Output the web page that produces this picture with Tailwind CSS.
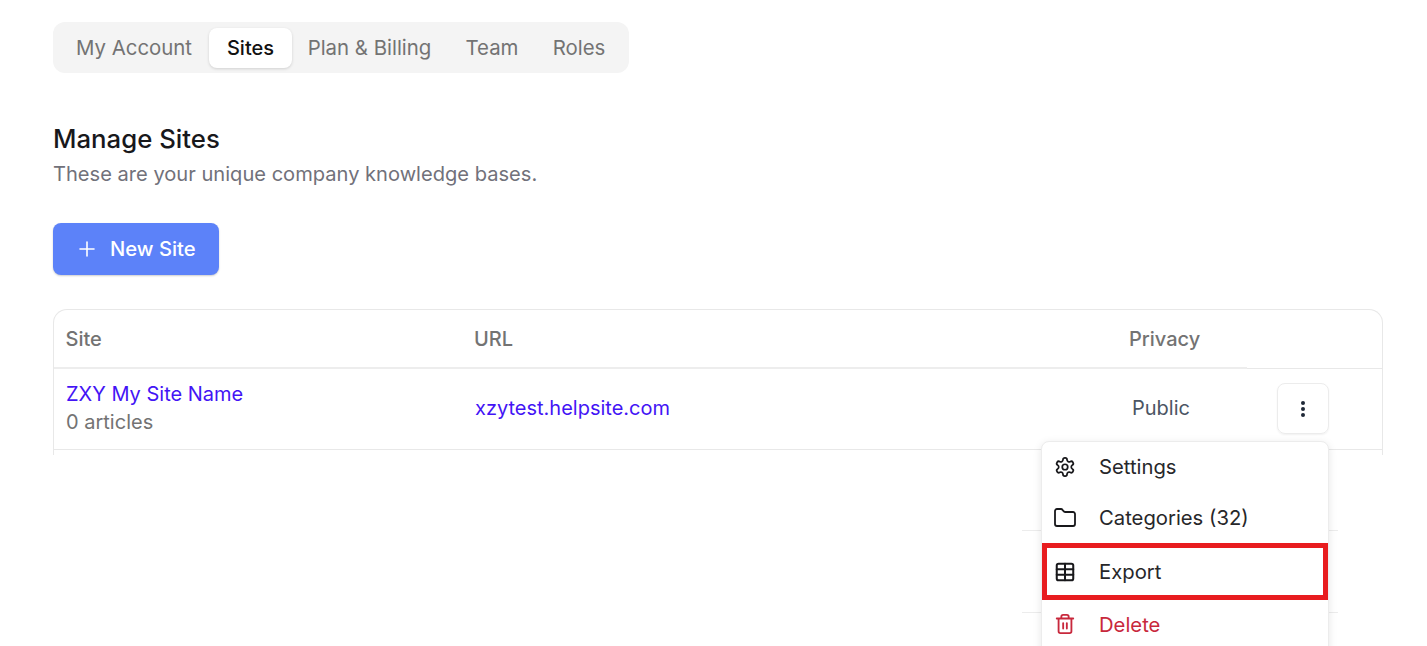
<!DOCTYPE html>
<html lang="en">
<head>
    <meta charset="UTF-8">
    <title>Manage Sites</title>
    <script src="https://cdn.jsdelivr.net/npm/@tailwindcss/browser@4"></script>
</head>
<body class="bg-white font-['Inter',sans-serif] h-[646px] overflow-hidden">
    <div class="relative h-[646px] overflow-hidden pt-[22px] pl-[53px] pr-[44px]">
        <!-- tabs -->
        <nav class="flex items-center w-[576px] h-[51px] rounded-[12px] bg-[#f4f4f4] pl-[6px] text-[20.4px] text-[#737373]">
            <a class="w-[150px] pt-[2px] text-center">My Account</a>
            <a class="w-[83px] h-[40px] flex items-center justify-center rounded-[8px] bg-white text-[#111111] font-medium text-[20px] shadow-[0_1px_3px_rgba(0,0,0,0.15)]">Sites</a>
            <a class="w-[155px] pt-[2px] text-center">Plan &amp; Billing</a>
            <a class="w-[90px] pt-[2px] text-center">Team</a>
            <a class="w-[84px] pt-[2px] text-center">Roles</a>
        </nav>

        <h1 class="mt-[49px] text-[25.75px] leading-[34px] font-medium text-[#18181b]">Manage Sites</h1>
        <p class="mt-[3px] text-[20.1px] leading-[31px] text-[#71717a]">These are your unique company knowledge bases.</p>

        <button class="mt-[33px] flex items-center w-[165.5px] h-[52px] rounded-[8px] bg-[#5c82f9] text-white text-[20.2px] font-medium pl-[25px] gap-[14px] shadow-[0_1px_2px_rgba(0,0,0,0.2)]">
            <svg class="w-[18px] h-[18px]" viewBox="0 0 18 18" fill="none" stroke="currentColor" stroke-width="1.6" stroke-linecap="round"><path d="M9 2v14M2 9h14"/></svg>
            New Site
        </button>

        <!-- sites table -->
        <div class="mt-[34px] h-[146px] w-[1330px] rounded-t-[14px] border-x border-t border-[#e8e8e8]">
            <div class="flex h-[59px] text-[20px] font-medium text-[#737373]">
                <div class="flex items-center w-[420px] pl-[11.5px] border-b-2 border-[#ededed]">Site</div>
                <div class="flex items-center w-[655px] border-b-2 border-[#ededed]">URL</div>
                <div class="flex items-center w-[118px] border-b-2 border-[#ededed]">Privacy</div>
                <div class="flex-1 border-b border-[#e8e8e8]"></div>
            </div>
            <div class="flex items-center h-[81px] border-b border-[#e8e8e8]">
                <div class="w-[421px] pl-[12px] pb-[2px]">
                    <a class="block text-[20px] leading-[28px] text-[#4314f5]">ZXY My Site Name</a>
                    <p class="text-[20px] leading-[28px] text-[#737373]">0 articles</p>
                </div>
                <a class="w-[657px] pb-[2px] text-[20px] text-[#4314f5]">xzytest.helpsite.com</a>
                <span class="w-[145px] pb-[2px] text-[20px] text-[#4b5563]">Public</span>
                <button class="flex items-center justify-center w-[52px] h-[51px] mb-[1px] rounded-[8px] border border-[#ececec] shadow-[0_1px_2px_rgba(0,0,0,0.06)]">
                    <svg class="w-[6px] h-[18px]" viewBox="0 0 6 18" fill="#1f2937"><circle cx="3" cy="3" r="2"/><circle cx="3" cy="9" r="2"/><circle cx="3" cy="15" r="2"/></svg>
                </button>
            </div>
        </div>

        <!-- faint rows behind the menu -->
        <div class="absolute left-[1022px] top-[530px] w-[316px] h-px bg-[#ececec]"></div>
        <div class="absolute left-[1022px] top-[612px] w-[316px] h-px bg-[#ececec]"></div>

        <!-- row menu -->
        <div class="absolute left-[1041px] top-[441px] w-[288px] h-[230px] rounded-[8px] border border-[#ececec] bg-white text-[20.25px] text-[#27272a] shadow-[0_2px_8px_rgba(0,0,0,0.1)]">
            <div class="flex items-center h-[50px] pl-[12px] gap-[23px]">
                <svg class="w-[22px] h-[22px]" viewBox="0 0 24 24" fill="none" stroke="#18181b" stroke-width="1.9" stroke-linecap="round" stroke-linejoin="round"><path d="M12.22 2h-.44a2 2 0 0 0-2 2v.18a2 2 0 0 1-1 1.73l-.43.25a2 2 0 0 1-2 0l-.15-.08a2 2 0 0 0-2.73.73l-.22.38a2 2 0 0 0 .73 2.73l.15.1a2 2 0 0 1 1 1.72v.51a2 2 0 0 1-1 1.74l-.15.09a2 2 0 0 0-.73 2.73l.22.38a2 2 0 0 0 2.73.73l.15-.08a2 2 0 0 1 2 0l.43.25a2 2 0 0 1 1 1.73V20a2 2 0 0 0 2 2h.44a2 2 0 0 0 2-2v-.18a2 2 0 0 1 1-1.73l.43-.25a2 2 0 0 1 2 0l.15.08a2 2 0 0 0 2.73-.73l.22-.39a2 2 0 0 0-.73-2.73l-.15-.08a2 2 0 0 1-1-1.74v-.5a2 2 0 0 1 1-1.74l.15-.09a2 2 0 0 0 .73-2.73l-.22-.38a2 2 0 0 0-2.73-.73l-.15.08a2 2 0 0 1-2 0l-.43-.25a2 2 0 0 1-1-1.73V4a2 2 0 0 0-2-2z"/><circle cx="12" cy="12" r="3"/></svg>
                <span>Settings</span>
            </div>
            <div class="flex items-center h-[51px] pl-[11px] gap-[22px]">
                <svg class="w-[24px] h-[24px]" viewBox="0 0 24 24" fill="none" stroke="#18181b" stroke-width="1.8" stroke-linecap="round" stroke-linejoin="round"><path d="M20 20a2 2 0 0 0 2-2V8a2 2 0 0 0-2-2h-7.9a2 2 0 0 1-1.69-.9L9.6 3.9A2 2 0 0 0 7.93 3H4a2 2 0 0 0-2 2v13a2 2 0 0 0 2 2Z"/></svg>
                <span class="pt-[2px]">Categories (32)</span>
            </div>
            <div class="flex items-center h-[57px] pl-[7px] gap-[23px] border-[5px] border-[#e81c1f]">
                <svg class="w-[22px] h-[22px]" viewBox="0 0 24 24" fill="none" stroke="#18181b" stroke-width="2.2" stroke-linecap="round" stroke-linejoin="round"><rect x="3" y="3" width="18" height="18" rx="2"/><path d="M3 9h18M3 15h18M12 3v18"/></svg>
                <span class="pt-[2px]">Export</span>
            </div>
            <div class="flex items-center h-[48px] pl-[12px] gap-[23px] text-[#c8283c]">
                <svg class="w-[22px] h-[22px]" viewBox="0 0 24 24" fill="none" stroke="currentColor" stroke-width="2" stroke-linecap="round" stroke-linejoin="round"><path d="M3 6h18M19 6v14a2 2 0 0 1-2 2H7a2 2 0 0 1-2-2V6M8 6V4a2 2 0 0 1 2-2h4a2 2 0 0 1 2 2v2M10 11v6M14 11v6"/></svg>
                <span class="pt-[2px]">Delete</span>
            </div>
        </div>
    </div>
</body>
</html>
